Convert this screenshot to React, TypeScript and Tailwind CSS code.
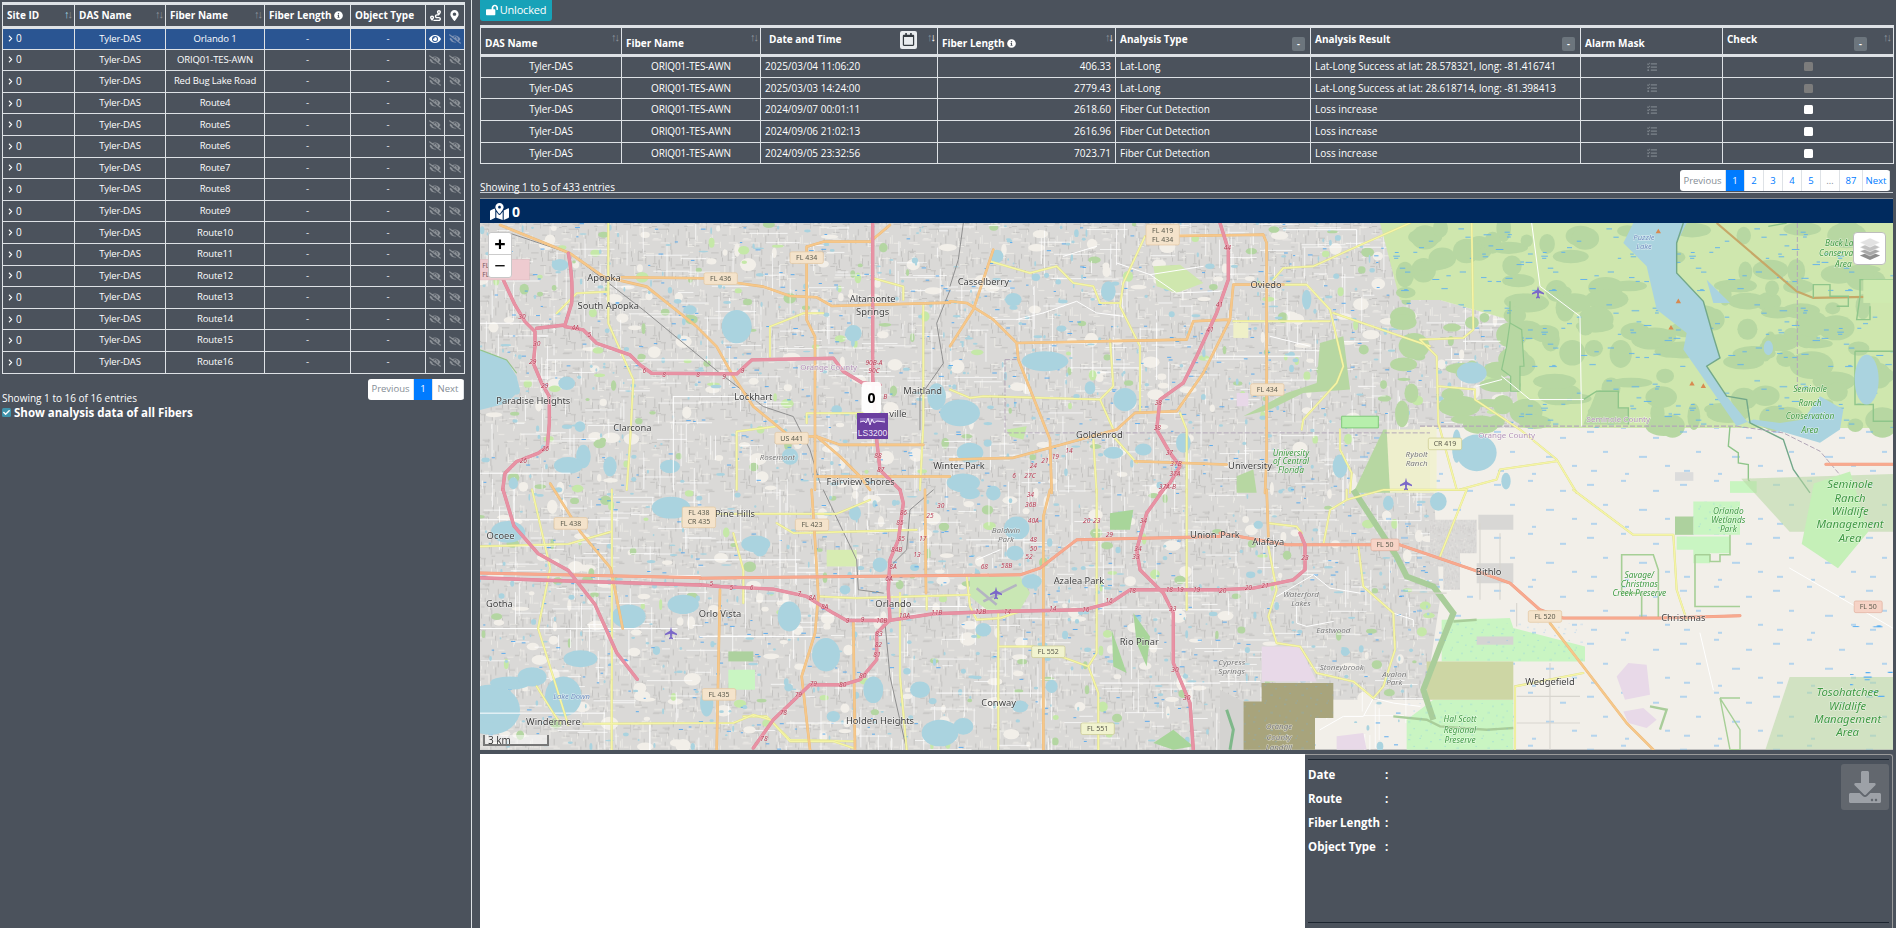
import {
  FaChevronRight, FaDownload, FaEye, FaEyeSlash, FaInfoCircle, FaLockOpen, FaMapMarkedAlt,
  FaMapMarkerAlt, FaRegCalendar, FaRoute, FaTasks, FaCheck,
} from "react-icons/fa";

const fibers = ["Orlando 1", "ORIQ01-TES-AWN", "Red Bug Lake Road", "Route4", "Route5", "Route6", "Route7", "Route8", "Route9", "Route10", "Route11", "Route12", "Route13", "Route14", "Route15", "Route16"];

const analysis = [
  ["2025/03/04 11:06:20", "406.33", "Lat-Long", "Lat-Long Success at lat: 28.578321, long: -81.416741", true],
  ["2025/03/03 14:24:00", "2779.43", "Lat-Long", "Lat-Long Success at lat: 28.618714, long: -81.398413", true],
  ["2024/09/07 00:01:11", "2618.60", "Fiber Cut Detection", "Loss increase", false],
  ["2024/09/06 21:02:13", "2616.96", "Fiber Cut Detection", "Loss increase", false],
  ["2024/09/05 23:32:56", "7023.71", "Fiber Cut Detection", "Loss increase", false],
] as const;

// --- map data: each frame has its own coordinates, taken from crops of the picture
const frames: Record<string, string> = {
  a: "translate(470 190) scale(.33333)",
  b: "translate(950 223) scale(.33333)",
  c: "translate(1420 223) scale(.33333)",
  d: "translate(700 490) scale(.33333)",
  e: "translate(1220 490) scale(.33333)",
  f: "translate(470 680) scale(.33333)",
  s: "scale(1.2092)",
};

type Roads = { pink?: string[]; salmon?: string[]; orange?: string[]; yellow?: string[]; rail?: string[]; white?: string[] };

const roads: Record<string, Roads> = {
  a: {
    pink: ["M100 270L135 345L165 395L195 425L195 470L190 520L215 580L238 620L238 700L232 770L205 790L140 815L105 850L98 900", "M295 190Q310 270 305 340L285 405L200 415", "M285 410L340 420L380 460L480 495L510 525L545 550L800 552L845 510L1090 505L1120 545L1175 578L1230 585", "M1208 100L1208 560L1220 750L1230 840L1290 900"],
    orange: ["M90 105L300 190L400 260L530 290L680 410L740 470L790 560L850 650L960 740L1040 740L1110 800L1170 860L1200 900", "M455 262L700 265L880 290L960 318L1040 322L1085 348L1440 338", "M1010 170L1010 390L1035 440L1035 900", "M1010 170L1060 155L1200 155L1260 105", "M1040 740L1110 765L1360 765M1035 860L1440 860"],
    yellow: ["M415 100L415 400L490 570L480 760L470 900", "M900 500L900 410L1000 370L1060 370", "M800 900L800 725L915 710", "M1010 700L1010 670L1230 670", "M1210 265L1300 290L1300 330", "M1360 340L1360 700L1350 900", "M260 370L320 310L415 305"],
    rail: ["M120 130L300 190L520 360L750 550L880 650L970 680L1020 780L1050 880", "M1440 300L1400 400L1420 520L1350 620L1350 720"],
    white: ["M30 400H240M230 510H1000M610 620V900M610 620H900M30 850H300"],
  },
  b: {
    pink: ["M810 0L835 80L835 170L800 270L740 400L700 480L630 530L620 620L660 690L690 730L660 780L630 810"],
    orange: ["M590 40L940 35L950 60L950 700L945 810", "M850 185H1000", "M0 235L50 240L130 290L200 360L710 350L730 295L840 290L850 185", "M130 80L70 260L0 370", "M200 360L205 410L300 650L305 810", "M840 290L760 450L680 565L555 570L500 620L190 705L0 710", "M555 715L830 725"],
    yellow: ["M585 40L520 180L510 250L570 370L570 570", "M120 115L240 150L320 130L370 180L430 190L450 240L510 240", "M480 350L490 490L450 530L100 520L60 525L0 500", "M450 530L490 620", "M430 650L440 810", "M970 170L1000 135L1090 130L1200 80L1380 0", "M1000 185L1070 185L1140 260L1180 430L1160 480L1060 590L1055 620", "M1150 270L1440 370", "M690 570L710 620L710 810", "M1170 620L1170 680L1205 750L1200 810", "M490 640L560 720", "M850 295H1140"],
    rail: ["M40 0L25 110L0 190"],
    white: ["M500 120L600 155L760 130M600 155L680 210L810 205M280 270L380 235L440 270L520 280M200 290L280 270M340 100L440 70M1000 20H1220V70M360 435H570M960 340L1080 370M800 400H1050M620 300V470"],
  },
  c: {
    yellow: ["M155 0L160 320L130 345L0 350", "M0 350L50 400L55 600L110 800", "M55 490L165 500L165 530L300 620L410 710L470 810", "M120 800L230 770L240 740L410 715"],
    white: ["M335 0L360 190L480 280L485 610", "M245 460L330 530L490 530", "M170 490L245 470", "M130 355H240M95 375V410H130"],
  },
  d: {
    pink: ["M600 0L610 40L595 150L570 210L565 300L570 390L530 430L530 510L480 570L430 585L330 585L220 690L160 775", "M0 285L60 290L220 298L320 320L400 370L440 392L570 392L700 372L900 365L1150 360L1230 340L1290 300L1560 300", "M1390 0L1340 70L1310 180L1320 240L1390 310L1420 370L1420 520L1470 640L1480 780"],
    salmon: ["M0 265L960 255L1020 235L1130 150L1560 140"],
    orange: ["M335 0L345 150L355 320L345 430L305 560L330 780", "M60 300L50 780", "M675 0L678 310", "M460 400L465 780", "M1050 0L1030 80L1030 780"],
    yellow: ["M100 130L130 240L130 340", "M0 72H410L510 30", "M230 100L280 130L650 120", "M1190 0V490L1165 530L1195 610V780", "M1460 0V360", "M895 370V780", "M895 470H1000L1165 530", "M800 260L810 350L830 390L900 385L960 365", "M360 320L470 325L810 315", "M600 310V560L620 780", "M130 680H200L270 750L460 755", "M680 320V360"],
    rail: ["M370 0L470 210L475 300L550 310", "M700 0L630 60L620 180L580 220", "M555 400L570 560L620 780"],
    white: ["M0 210H300M0 440H340M620 350H800M800 150H1000M710 610H1030M1200 360H1560M1200 580H1560M240 0V300M830 210L900 180"],
  },
  e: {
    pink: ["M240 130L255 165L255 240L220 270L100 295L0 300"],
    salmon: ["M0 130L200 165H540L760 240L870 280L960 360L1030 385H1320L1560 378"],
    orange: ["M140 0L145 140", "M990 400L1220 700L1300 780"],
    yellow: ["M380 0V30L330 60L310 165", "M380 30L490 0H740L660 200", "M1060 0L1240 135H1360L1370 300L1400 390", "M145 100L230 110L245 130", "M145 170L170 300L145 380L170 460L240 470L290 550L400 575L460 625L490 590L525 480L520 370L430 290L415 170", "M885 780V590L1090 550"],
    white: ["M170 320L280 255L330 295L420 310M230 340V400L260 410L340 395M0 575H120M300 720L370 680H430L460 625L520 640L600 650M520 370L580 390V410M1440 430L1480 600"],
  },
  f: {
    yellow: ["M340 132L790 130L850 105L900 120L960 185H1090L1150 205", "M200 20L250 100L270 130", "M425 0V210"],
    white: ["M540 135V210M950 130H1200"],
  },
  s: {
    pink: ["M416 405L425 435L445 458L470 472L492 500L510 540L527 562", "M397 478L450 480L579 484"],
    salmon: ["M397 474L579 478", "M1510 384H1566"],
    orange: ["M455 400L480 440L505 470L515 520"],
    yellow: ["M506 405V562", "M397 452L470 450L505 440", "M440 405L455 470L445 520L470 600"],
    white: ["M397 430H510M397 520H560M397 590H500M1480 470L1566 520"],
  },
};

const roadStyle = {
  white: { c: "#ffffff", w: 1 },
  yellow: { c: "#f5f5a6", w: 1.5, casing: "#dcdc8a" },
  orange: { c: "#f6c78a", w: 2, casing: "#e8b878" },
  salmon: { c: "#f8a98e", w: 2.4, casing: "#ec9a80" },
  pink: { c: "#e892a4", w: 2.8, casing: "#dd8497" },
  rail: { c: "#8f8f8f", w: 1 },
} as const;

// [cx, cy, rx, ry] in a frame's coordinates
const lakes: Record<string, number[][]> = {
  a: [[800, 410, 45, 50], [270, 225, 25, 18], [290, 580, 25, 20], [340, 800, 22, 35], [420, 830, 20, 30], [600, 830, 30, 20], [660, 360, 20, 14], [1150, 430, 25, 25], [1400, 620, 28, 40], [960, 800, 25, 25], [330, 710, 16, 16], [130, 880, 14, 18], [1100, 660, 16, 14]],
  b: [[285, 415, 70, 30], [525, 530, 35, 35], [475, 205, 22, 30], [700, 660, 22, 30], [30, 570, 60, 40], [60, 690, 40, 30], [490, 690, 30, 18], [580, 680, 25, 18], [1170, 730, 22, 35], [40, 780, 50, 28], [140, 100, 20, 20], [190, 230, 25, 20], [420, 495, 16, 20], [1070, 230, 14, 30]],
  c: [[155, 450, 45, 32], [170, 690, 60, 55], [110, 670, 14, 50], [1340, 470, 36, 75], [1045, 375, 14, 22], [258, 775, 14, 25]],
  d: [[268, 380, 35, 45], [378, 495, 42, 50], [465, 70, 18, 22], [950, 115, 38, 35], [945, 190, 26, 22], [995, 275, 30, 22], [520, 600, 30, 40], [720, 730, 55, 40], [790, 710, 30, 25], [850, 420, 24, 20], [660, 600, 30, 25], [810, 10, 30, 18], [880, 10, 22, 22], [435, 300, 16, 14], [180, 170, 25, 30], [1055, 590, 18, 20], [960, 650, 24, 18], [540, 225, 22, 22], [400, 680, 20, 16], [20, 640, 20, 40]],
  e: [[505, 40, 16, 22], [655, 35, 25, 28], [115, 105, 14, 12], [92, 255, 14, 10], [480, 770, 10, 14]],
  f: [[60, 90, 90, 75], [280, 50, 55, 60], [120, 10, 60, 20]],
  s: [[420, 440, 14, 9], [470, 385, 12, 7], [520, 510, 14, 10], [565, 500, 13, 8], [440, 560, 12, 8], [555, 420, 16, 9], [625, 450, 12, 7], [480, 545, 14, 7], [405, 590, 10, 8]],
};

const shields: [string, number, number, string, string?, string?][] = [
  ["b", 638, 35, "FL 419|FL 434"],
  ["a", 1010, 203, "FL 434"],
  ["a", 752, 266, "FL 436"],
  ["a", 965, 745, "US 441"],
  ["s", 472, 433, "FL 438"],
  ["s", 578, 428, "FL 438|CR 435"],
  ["d", 336, 105, "FL 423"],
  ["b", 952, 500, "FL 434"],
  ["c", 75, 663, "CR 419", "#f3f3d0", "#c9c98c"],
  ["e", 495, 165, "FL 50", "#f6d3c6", "#e0ad9b"],
  ["e", 975, 380, "FL 520"],
  ["d", 57, 614, "FL 435"],
  ["d", 1045, 486, "FL 552", "#f1f3cf", "#c9c98c"],
  ["d", 1193, 717, "FL 551", "#f1f3cf", "#c9c98c"],
  ["s", 1545, 502, "FL 50", "#f6d3c6", "#e0ad9b"],
];

// frame, x, y, text, kind
type Label = [string, number, number, string, "place" | "park" | "grey" | "county" | "water"];
const labels: Label[] = [
  ["a", 402, 272, "Apopka", "place"], ["a", 415, 356, "South Apopka", "place"], ["a", 190, 642, "Paradise Heights", "place"],
  ["a", 487, 723, "Clarcona", "place"], ["a", 850, 629, "Lockhart", "place"], ["a", 1208, 336, "Altamonte", "place"],
  ["a", 1208, 375, "Springs", "place"], ["a", 1358, 612, "Maitland", "place"], ["a", 1284, 681, "ville", "place"],
  ["a", 1172, 885, "Fairview Shores", "place"], ["a", 922, 811, "Rosemont", "grey"], ["a", 1076, 541, "Orange County", "county"],
  ["b", 100, 187, "Casselberry", "place"], ["b", 948, 196, "Oviedo", "place"], ["b", 448, 644, "Goldenrod", "place"],
  ["b", 900, 737, "University", "place"], ["b", 1023, 698, "University", "park"], ["b", 1023, 724, "of Central", "park"], ["b", 1023, 750, "Florida", "park"],
  ["b", 1400, 703, "Rybolt", "grey"], ["b", 1400, 729, "Ranch", "grey"],
  ["s", 793, 388, "Winter Park", "place"], ["s", 414, 446, "Ocoee", "place"], ["s", 413, 502, "Gotha", "place"],
  ["c", 672, 52, "Puzzle", "water"], ["c", 672, 79, "Lake", "water"], ["c", 595, 596, "Seminole County", "county"], ["c", 260, 645, "Orange County", "county"],
  ["c", 1170, 508, "Seminole", "park"], ["c", 1170, 548, "Ranch", "park"], ["c", 1170, 589, "Conservation", "park"], ["c", 1170, 629, "Area", "park"],
  ["c", 1270, 68, "Buck Lake", "park"], ["c", 1270, 100, "Conservation", "park"], ["c", 1270, 131, "Area", "park"],
  ["d", 105, 81, "Pine Hills", "place"], ["d", 60, 381, "Orlo Vista", "place"], ["d", 580, 352, "Orlando", "place"], ["d", 1137, 283, "Azalea Park", "place"],
  ["d", 1318, 467, "Rio Pinar", "place"], ["d", 896, 648, "Conway", "place"], ["d", 540, 704, "Holden Heights", "place"], ["d", 1510, 145, "Union", "place"],
  ["d", 918, 130, "Baldwin", "grey"], ["d", 918, 156, "Park", "grey"],
  ["e", 30, 145, "Park", "place"], ["e", 145, 167, "Alafaya", "place"], ["e", 806, 257, "Bithlo", "place"], ["e", 1390, 394, "Christmas", "place"], ["e", 990, 587, "Wedgefield", "place"],
  ["e", 243, 323, "Waterford", "grey"], ["e", 243, 349, "Lakes", "grey"], ["e", 340, 430, "Eastwood", "grey"], ["e", 365, 540, "Stoneybrook", "grey"], ["e", 523, 561, "Avalon", "grey"], ["e", 523, 587, "Park", "grey"],
  ["e", 35, 526, "Cypress", "grey"], ["e", 35, 552, "Springs", "grey"], ["e", 177, 719, "Orange", "grey"], ["e", 177, 751, "County", "grey"], ["e", 177, 780, "Landfill", "grey"],
  ["e", 720, 696, "Hal Scott", "park"], ["e", 720, 729, "Regional", "park"], ["e", 720, 761, "Preserve", "park"],
  ["e", 1258, 264, "Savage/", "park"], ["e", 1258, 291, "Christmas", "park"], ["e", 1258, 318, "Creek Preserve", "park"], ["e", 1525, 74, "Orlando", "park"], ["e", 1525, 100, "Wetlands", "park"], ["e", 1525, 126, "Park", "park"],
  ["f", 305, 58, "Lake Down", "water"], ["f", 250, 136, "Windermere", "place"],
  ["s", 1530, 404, "Seminole", "park"], ["s", 1530, 415, "Ranch", "park"], ["s", 1530, 426, "Wildlife", "park"], ["s", 1530, 437, "Management", "park"], ["s", 1530, 448, "Area", "park"],
  ["s", 1528, 576, "Tosohatchee", "park"], ["s", 1528, 587, "Wildlife", "park"], ["s", 1528, 598, "Management", "park"], ["s", 1528, 609, "Area", "park"],
];

const exitsNumbers: [string, number, number, string][] = [
  ["a", 156, 388, "30"], ["a", 200, 468, "30"], ["a", 188, 522, "29"], ["a", 224, 593, "29"], ["a", 226, 783, "26"], ["a", 160, 820, "26"], ["a", 316, 420, "4A"], ["a", 358, 440, "5"],
  ["a", 523, 548, "6"], ["a", 582, 562, "8"], ["a", 684, 560, "8"], ["a", 762, 566, "9"], ["a", 818, 548, "9"], ["a", 1212, 525, "90B-A"], ["a", 1212, 548, "90C"], ["a", 1246, 626, "B"], ["a", 1224, 803, "88"], ["a", 1232, 847, "87"],
  ["b", 832, 80, "44"], ["b", 808, 252, "41"], ["b", 780, 327, "41"], ["b", 625, 547, "38"], ["b", 622, 620, "38"], ["b", 658, 695, "37"], ["b", 678, 730, "37B"], ["b", 675, 760, "37A"], ["b", 652, 797, "37A-B"],
  ["b", 357, 690, "14"], ["b", 316, 708, "19"], ["b", 285, 720, "21"], ["b", 250, 736, "24"], ["b", 192, 765, "6"], ["b", 240, 765, "27C"],
  ["d", 34, 290, "5"], ["d", 94, 301, "5"], ["d", 155, 300, "6"], ["d", 298, 318, "7"], ["d", 337, 330, "8A"], ["d", 374, 359, "8A"], ["d", 443, 401, "9"], ["d", 488, 397, "9"], ["d", 545, 399, "10B"], ["d", 613, 385, "10A"], ["d", 710, 376, "11B"], ["d", 842, 374, "12B"], ["d", 922, 372, "14"], ["d", 1058, 365, "14"], ["d", 1157, 368, "16"], ["d", 1227, 340, "16"], ["d", 1297, 310, "18"], ["d", 1408, 306, "18"], ["d", 1440, 307, "19"], ["d", 1490, 307, "19"],
  ["d", 610, 77, "86"], ["d", 600, 106, "85"], ["d", 604, 154, "85"], ["d", 590, 186, "84B"], ["d", 579, 238, "8A"], ["d", 567, 273, "6A"], ["d", 537, 440, "83"], ["d", 535, 471, "82"], ["d", 531, 503, "81"], ["d", 488, 565, "80"], ["d", 428, 593, "80"], ["d", 340, 590, "79"], ["d", 295, 623, "79"], ["d", 250, 677, "78"], ["d", 192, 755, "78"],
  ["d", 722, 54, "30"], ["d", 690, 85, "25"], ["d", 668, 153, "17"], ["d", 651, 203, "13"], ["d", 853, 238, "68"], ["d", 920, 235, "58B"], ["d", 991, 20, "34"], ["d", 992, 51, "36B"], ["d", 1000, 99, "40A"], ["d", 1000, 158, "48"], ["d", 1000, 185, "50"], ["d", 987, 208, "52"], ["d", 1160, 99, "20"], ["d", 1190, 99, "23"], ["d", 1228, 141, "29"], ["d", 1330, 101, "34"], ["d", 1314, 184, "34"], ["d", 1308, 208, "33"], ["d", 1418, 365, "33"], ["d", 1425, 548, "30"], ["d", 1460, 630, "30"],
  ["e", 255, 211, "23"], ["e", 85, 302, "20"], ["e", 135, 296, "21"], ["e", 8, 310, "20"],
];

const planes: [number, number][] = [[1538, 292], [1406, 484], [996, 593], [671, 633]];
const beacons: [number, number][] = [[715, 25], [775, 235], [753, 314], [816, 482], [850, 489]];

function seeded(seed: number) {
  let t = seed;
  return () => {
    t = (t + 0x6d2b79f5) | 0;
    let r = Math.imul(t ^ (t >>> 15), 1 | t);
    r = (r + Math.imul(r ^ (r >>> 7), 61 | r)) ^ r;
    return ((r ^ (r >>> 14)) >>> 0) / 4294967296;
  };
}

const rnd = seeded(41);
const inTown = () => {
  // east edge of the built up area depends on the height
  const y = 223 + rnd() * 527;
  const edge = y < 300 ? 1390 : y < 428 ? 1510 : 1430;
  return [480 + rnd() * (edge - 480), y];
};
const townLakes = Array.from({ length: 760 }, () => { const [x, y] = inTown(); return [x, y, 0.8 + rnd() * rnd() * 5, 0.8 + rnd() * rnd() * 4]; });
const townGreen = Array.from({ length: 240 }, () => { const [x, y] = inTown(); return [x, y, 1.5 + rnd() * 5, 1.5 + rnd() * 4, rnd()]; });
const townBare = Array.from({ length: 300 }, () => { const [x, y] = inTown(); return [x, y, 2 + rnd() * 7, 2 + rnd() * 5]; });
const townStreets = Array.from({ length: 800 }, () => { const [x, y] = inTown(); const l = 8 + rnd() * 38; return rnd() > 0.5 ? `M${x} ${y}h${l}` : `M${x} ${y}v${l}`; }).join("");
const townDashes = Array.from({ length: 600 }, () => { const [x, y] = inTown(); return `M${x} ${y}h${2 + rnd() * 3}`; }).join("");
const woods = Array.from({ length: 150 }, () => [1400 + rnd() * 493, 223 + rnd() * 205, 6 + rnd() * 16, 4 + rnd() * 10]);

// speckle of house blocks: a tile of short strokes that do not line up
const tileBits = (n: number) => Array.from({ length: n }, () => {
  const x = (rnd() * 84).toFixed(1);
  const y = (rnd() * 66).toFixed(1);
  const l = (3 + rnd() * 6).toFixed(1);
  return rnd() > 0.5 ? `M${x} ${y}h${l}` : `M${x} ${y}v${l}`;
}).join("");
const tileDark = tileBits(90);
const tileLight = tileBits(70);
const marshBits = Array.from({ length: 34 }, () => `M${(rnd() * 140).toFixed(1)} ${(rnd() * 70).toFixed(1)}h${(3 + rnd() * 5).toFixed(1)}`).join("");

function MapDrawing() {
  return (
    <svg viewBox="480 223 1413 527" className="block w-full h-full blur-[0.35px]" preserveAspectRatio="none">
      <defs>
        <pattern id="urban" width="90" height="72" patternUnits="userSpaceOnUse">
          <rect width="90" height="72" fill="#dad9d7" />
          <path d={tileDark} stroke="#c4c3c1" strokeWidth="1" />
          <path d={tileLight} stroke="#efede9" strokeWidth=".8" />
        </pattern>
        <pattern id="marsh" width="148" height="76" patternUnits="userSpaceOnUse">
          <path d={marshBits} stroke="#58aef2" strokeWidth=".9" />
        </pattern>
        <pattern id="sparse" width="93" height="53" patternUnits="userSpaceOnUse">
          <path d="M6 8h7M40 4h5M72 14h6M22 28h5M58 33h8M84 42h5M10 47h6M44 50h4" stroke="#66b2f2" strokeWidth=".9" />
        </pattern>
      </defs>

      <rect x="480" y="223" width="1413" height="527" fill="#f2efe9" />
      <path d="M480 223H1390L1400 300L1440 300L1510 320L1520 428L1430 428L1440 600L1425 700L1330 700L1200 700L1000 750H480Z" fill="url(#urban)" />
      <path d="M1000 750L1200 690L1290 690V750Z" fill="url(#urban)" />
      {townBare.map((b, i) => <ellipse key={i} cx={b[0]} cy={b[1]} rx={b[2]} ry={b[3]} fill="#f2efe9" />)}
      {townGreen.map((g, i) => <ellipse key={i} cx={g[0]} cy={g[1]} rx={g[2]} ry={g[3]} fill={g[4] > 0.6 ? "#c5e8a8" : "#b4d6a2"} />)}
      <path d={townStreets} stroke="#ffffff" strokeOpacity=".8" strokeWidth=".9" fill="none" />
      {townLakes.map((l, i) => <ellipse key={i} cx={l[0]} cy={l[1]} rx={l[2]} ry={l[3]} fill="#aad3df" />)}
      <path d={townDashes} stroke="#4fa6ee" strokeWidth=".9" />

      {/* north east: woods and marsh */}
      <path d="M1345 223H1893V428H1520L1510 320L1440 300L1400 300L1380 223Z" fill="#cfe7ae" />
      {woods.map((w, i) => <ellipse key={i} cx={w[0]} cy={w[1]} rx={w[2]} ry={w[3]} fill="#b7d7a2" />)}
      <path d="M1345 223H1893V428H1520L1510 320L1440 300L1400 300L1380 223Z" fill="url(#marsh)" />
      <path d="M1345 428H1893V750H1430V700Z" fill="url(#sparse)" />

      <g transform={frames.c}>
        <path d="M0 610H50V810H0Z" fill="#f1f1d2" />
        <path d="M640 0H800L770 60L770 150L850 235L880 340L900 405L860 430L920 520L985 600L1100 630L1200 660L1260 620L1270 560L1200 520L1150 590L1080 600L1000 590L950 610L860 480L790 380L800 330L710 260L680 130L610 60Z" fill="#aad3df" />
        <path d="M860 170L930 240L880 240Z" fill="#aad3df" />
        <path d="M490 605L530 505H595V555H625V605Z" fill="#b7d7a2" />
        <path d="M790 0L770 60L770 150L850 235L880 340L900 405L860 430L920 520L980 530L990 600L1090 650L1120 740L1170 810" fill="none" stroke="#73a88a" strokeWidth="1.4" vectorEffect="non-scaling-stroke" />
        <path d="M890 0L1130 205L1180 225L1420 220" fill="none" stroke="#c6a868" strokeWidth="2.2" vectorEffect="non-scaling-stroke" />
        <path d="M270 235V300L305 320L312 430H300V505H272V460L245 440L260 370L270 300" fill="#b7d7a2" stroke="#8fc58a" strokeWidth="1.2" vectorEffect="non-scaling-stroke" />
        <path d="M490 530L530 505H595V555H625V605M1180 225V185H1230V220H1285V250H1250M1320 220V170H1420M1320 220L1310 290H1350V250M1305 385H1420M1305 385V545H1360V595H1420M930 610L925 670L955 690V720L985 725V770L1005 800M1045 10L1100 0" fill="none" stroke="#8fc58a" strokeWidth="1.4" vectorEffect="non-scaling-stroke" />
        <rect x="930" y="775" width="80" height="35" fill="#c8f5c0" />
        <rect x="765" y="748" width="55" height="26" fill="#dcdcdc" />
        <path d="M1330 170H1420V240H1330Z" fill="#cfeab0" />
        <path d="M0 610H950" stroke="#b3a7b8" strokeWidth="1.2" strokeDasharray="5 2" vectorEffect="non-scaling-stroke" />
        <path d="M950 610L1090 630L1200 685L1280 780M1132 0V500" fill="none" stroke="#b3a7b8" strokeWidth="1" strokeDasharray="5 2" vectorEffect="non-scaling-stroke" />
      </g>

      <g transform={frames.b}>
        <path d="M1310 620H1440V810H1310Z" fill="#eeefcd" />
        <path d="M1210 810L1300 620H1310L1320 810Z" fill="#b7d7a2" />
        <path d="M1175 580H1285V615H1175Z" fill="#b7efac" stroke="#7fca79" strokeWidth="1" vectorEffect="non-scaling-stroke" />
        <path d="M880 580L1010 510L1100 480L1110 360L1180 340L1200 500L1060 510L960 560Z" fill="#b7d7a2" />
        <path d="M850 300H895V345H850Z" fill="#eff0c8" />
        <path d="M860 510H895V550H860Z" fill="#e8d8e8" />
        <path d="M860 760L910 740L920 810H860Z" fill="#b7d7a2" />
        <path d="M610 130L690 125L760 180L680 210L620 190Z" fill="#cfe7ae" />
        <path d="M170 620L230 610L220 650L180 640Z" fill="#c5e8a8" />
        <path d="M170 630H1440" stroke="#b3a7b8" strokeWidth="1" strokeDasharray="5 2" vectorEffect="non-scaling-stroke" />
        <path d="M165 410H200M165 410V630" stroke="#b3a7b8" strokeWidth="1" strokeDasharray="5 2" vectorEffect="non-scaling-stroke" />
      </g>

      <g transform={frames.e}>
        <path d="M125 580H340V685H285V780H70V635H125Z" fill="#a8a47c" />
        <path d="M125 470H240L290 575H125Z" fill="#e8d9e8" />
        <path d="M665 390L870 385L880 415L1095 470V515H665Z" fill="#c9f5c2" />
        <path d="M560 690L640 630H880V780H560Z" fill="#c9f5c2" />
        <path d="M620 515H880V630H620Z" fill="#cdd6a4" />
        <path d="M770 440H880V465H770Z" fill="#d4d4d2" />
        <path d="M1420 35H1560V135H1420ZM1370 140H1530V190H1470V220H1420V180H1370Z" fill="#c9f5c2" />
        <rect x="1365" y="80" width="55" height="55" fill="#add19e" />
        <path d="M1190 560L1225 520L1280 525L1290 615L1215 630ZM1210 665L1270 655L1310 690L1280 715L1225 700ZM350 740L430 730L440 780H350Z" fill="#e8d9e8" />
        <path d="M630 90H770V190H720V300H670V230H630Z" fill="url(#urban)" />
        <path d="M770 220H880V280H770ZM775 75H880V120H775Z" fill="#d8d7d5" />
        <path d="M400 0L530 200L560 260L640 290L700 370L660 470L610 600L640 690" fill="none" stroke="#a9cd9a" strokeWidth="6" vectorEffect="non-scaling-stroke" />
        <path d="M520 680L620 690L660 710L800 720L880 715M700 395L770 390M1290 650L1340 660L1320 720" fill="none" stroke="#a9cd9a" strokeWidth="2.4" vectorEffect="non-scaling-stroke" />
        <path d="M1205 195H1300L1315 240V385H1265V310H1205ZM1425 195H1470V215H1500V195H1530V135M1425 195V350H1560M1500 625H1560" fill="none" stroke="#a6cf96" strokeWidth="1.6" vectorEffect="non-scaling-stroke" />
        <path d="M1500 625L1560 720V780H1530L1500 625Z" fill="none" stroke="#a6cf96" strokeWidth="1.4" vectorEffect="non-scaling-stroke" />
        <path d="M890 700H1080M990 520V780M890 620H1080M780 100V330M840 130V330M560 310H680M890 340V410" stroke="#d8d5cf" strokeWidth="1.1" fill="none" vectorEffect="non-scaling-stroke" />
        <path d="M0 600V780H70V635" fill="#d4d3d1" />
        <path d="M20 660L40 720L30 780" stroke="#7fb88a" strokeWidth="3" fill="none" vectorEffect="non-scaling-stroke" />
        <path d="M125 580H340V685H285V780H70V635H125ZM665 400H1095V515H665ZM560 640H880V780H560ZM1420 35H1560V135H1420Z" fill="url(#sparse)" />
      </g>

      <g transform={frames.s}>
        <path d="M1440 396L1566 392V440H1480ZM1480 560H1566V620H1460Z" fill="#b7d7a2" opacity=".55" />
        <path d="M1500 400L1530 390L1545 440L1520 470L1490 450Z" fill="#c5f0b8" />
        <path d="M1530 515H1566V580H1530Z" fill="url(#marsh)" />
      </g>

      <g transform={frames.d}>
        <path d="M85 540H165V600H85Z" fill="#c9f5c2" />
        <path d="M85 485H160V515H85Z" fill="#add19e" />
        <path d="M380 180H470V230H380Z" fill="#d7ecb2" />
        <path d="M810 260H960L990 310L960 360H860L810 320Z" fill="#c9e7b4" />
        <path d="M1235 420L1280 550L1240 530ZM1300 370L1350 440L1340 530L1310 460ZM1230 70L1300 60L1290 120L1230 120ZM1360 760L1420 720L1480 770L1420 780Z" fill="#a8d59a" />
      </g>

      {Object.entries(lakes).map(([f, list]) => (
        <g key={f} transform={frames[f]}>
          {list.map((l, i) => <ellipse key={i} cx={l[0]} cy={l[1]} rx={l[2]} ry={l[3]} fill="#aad3df" />)}
        </g>
      ))}
      <g transform={frames.a}>
        <path d="M30 480L110 510L140 560L150 600L110 640L30 660Z" fill="#aad3df" />
        <path d="M30 480L110 510L140 550" fill="none" stroke="#93c48a" strokeWidth="1.2" vectorEffect="non-scaling-stroke" />
      </g>

      {(["white", "rail", "yellow", "orange", "salmon", "pink"] as const).map((kind) => (
        <g key={kind} fill="none" strokeLinejoin="round" strokeLinecap="round">
          {Object.entries(roads).map(([f, r]) => {
            const st = roadStyle[kind];
            const d = (r[kind] ?? []).join("");
            if (!d) return null;
            return (
              <g key={f} transform={frames[f]}>
                {"casing" in st && <path d={d} stroke={st.casing} strokeWidth={st.w + 0.6} vectorEffect="non-scaling-stroke" />}
                <path d={d} stroke={st.c} strokeWidth={st.w} vectorEffect="non-scaling-stroke" />
              </g>
            );
          })}
        </g>
      ))}

      <g transform={frames.d}>
        <path d="M830 295L890 345M850 335L950 285" stroke="#b4b4c2" strokeWidth="2.6" vectorEffect="non-scaling-stroke" />
      </g>
      <g transform={frames.c} fill="#d8894f">
        {beacons.map(([x, y], i) => <path key={i} d={`M${x} ${y - 8}l8 14h-16z`} />)}
      </g>
      {planes.map(([x, y], i) => (
        <path key={i} transform={`translate(${x} ${y})`} fill="#7b68c8" d="M0-6L1-2L6 1V2.5L1 1L.8 4L2 5.5V6.5L0 6L-2 6.5V5.5L-.8 4L-1 1L-6 2.5V1L-1-2Z" />
      ))}

      {exitsNumbers.map(([f, x, y, t], i) => (
        <g key={i} transform={frames[f]}>
          <text x={x} y={y} textAnchor="middle" fontSize="20" fontStyle="italic" fill="#b5374f" stroke="#ffffff" strokeOpacity=".45" strokeWidth="2" paintOrder="stroke" fontFamily="'Noto Sans',sans-serif">{t}</text>
        </g>
      ))}

      {labels.map(([f, x, y, t, kind], i) => {
        const k = f === "s" ? 0.2757 : 1;
        const style = {
          place: { fs: 28, c: "#3f3f3f", it: false },
          park: { fs: 25, c: "#3f9a42", it: true },
          grey: { fs: 24, c: "#777777", it: true },
          county: { fs: 24, c: "#b393b8", it: false },
          water: { fs: 23, c: "#6f8fc0", it: true },
        }[kind];
        return (
          <g key={i} transform={frames[f]}>
            <text x={x} y={y} textAnchor="middle" fontSize={(f === "s" && kind === "park" ? 34 : style.fs) * k} fontStyle={style.it ? "italic" : "normal"} fill={style.c} stroke="#ffffff" strokeOpacity=".6" strokeWidth={3 * k} paintOrder="stroke" fontFamily="'Noto Sans',sans-serif">{t}</text>
          </g>
        );
      })}

      <g transform={frames.a}>
        <rect x="30" y="208" width="148" height="62" fill="#eecbd0" stroke="#d9aab2" />
        <text x="37" y="233" fontSize="20" fill="#7a5a5f" fontFamily="'Noto Sans',sans-serif">FL Toll</text>
        <text x="37" y="260" fontSize="20" fill="#7a5a5f" fontFamily="'Noto Sans',sans-serif">FL Toll</text>
      </g>

      {shields.map(([f, x, y, t, bg, line], i) => {
        const rows = t.split("|");
        const scale = f === "s" ? 0.2757 : 1;
        const w = (rows[0].length > 5 ? 100 : 84) * scale;
        const h = (rows.length * 27 + 8) * scale;
        return (
          <g key={i} transform={frames[f]}>
            <rect x={x - w / 2} y={y - h / 2} width={w} height={h} rx={5 * scale} fill={bg ?? "#f4e3cb"} stroke={line ?? "#e2c69f"} strokeWidth={2 * scale} />
            {rows.map((row, j) => (
              <text key={row} x={x} y={y - h / 2 + (27 * j + 25) * scale} textAnchor="middle" fontSize={21 * scale} fill="#5b5b4d" fontFamily="'Noto Sans',sans-serif">{row}</text>
            ))}
          </g>
        );
      })}
    </svg>
  );
}

function SortArrows({ active }: { active?: "up" | "down" }) {
  return (
    <span className="absolute top-[3px] right-[3px] text-[11px] font-normal leading-none tracking-[-2px] text-[#8f959c]">
      <span className={active === "up" ? "text-[#9fd4e0]" : ""}>↑</span>
      <span className={active === "down" ? "text-white" : ""}>↓</span>
    </span>
  );
}

function MiniButton() {
  return <span className="absolute right-[5px] top-[9px] flex h-[14px] w-[13px] items-center justify-center rounded-[2px] bg-[#6c757d] text-[9px] leading-none text-white">-</span>;
}

function Pager({ items, className }: { items: string[]; className?: string }) {
  const short = items.length === 3;
  return (
    <div className={`flex overflow-hidden rounded-[3px] text-[9.5px] ${className ?? ""}`}>
      {items.map((item) => {
        const current = item === "1";
        const muted = item === "Previous" || item === "…" || (short && item === "Next");
        return (
          <span
            key={item}
            className={`flex h-[21px] items-center justify-center border-r border-[#dee2e6] ${current ? "bg-[#007bff] text-white" : "bg-white"} ${muted ? "text-[#868e96]" : current ? "" : "text-[#007bff]"} ${item === "Previous" ? "w-[46px]" : item === "Next" ? (short ? "w-[31px]" : "w-[27px]") : item === "87" ? "w-[23px]" : "w-[19px]"}`}
          >
            {item}
          </span>
        );
      })}
    </div>
  );
}

function FiberTable() {
  const head = "relative border border-[#dee2e6] border-b-[3px] border-t-[3px] px-[4px] text-left text-[10px] font-bold";
  const cell = "border border-[#dee2e6] text-center text-[9.5px] tracking-[-0.15px] h-[21.6px] p-0";
  return (
    <table className="w-[462px] table-fixed border-collapse text-white">
      <colgroup>
        <col className="w-[72px]" />
        <col className="w-[91px]" />
        <col className="w-[99px]" />
        <col className="w-[86px]" />
        <col className="w-[75px]" />
        <col className="w-[19px]" />
        <col className="w-[20px]" />
      </colgroup>
      <thead>
        <tr className="h-[24px]">
          <th className={head}>Site ID<SortArrows active="up" /></th>
          <th className={head}>DAS Name<SortArrows /></th>
          <th className={head}>Fiber Name<SortArrows /></th>
          <th className={head}>
            <span className="flex items-center gap-[2px]">Fiber Length <FaInfoCircle className="text-[9px]" /></span>
          </th>
          <th className={head}>Object Type</th>
          <th className={`${head} !px-0`}><FaRoute className="mx-auto text-[11px]" /></th>
          <th className={`${head} !px-0`}><FaMapMarkerAlt className="mx-auto text-[11px]" /></th>
        </tr>
      </thead>
      <tbody>
        {fibers.map((name, i) => (
          <tr key={name} className={i === 0 ? "bg-[#2a5592]" : ""}>
            <td className={`${cell} !text-left pl-[4px]`}>
              <span className="flex items-center gap-[2px] text-[10px]"><FaChevronRight className="text-[7px]" />0</span>
            </td>
            <td className={cell}>Tyler-DAS</td>
            <td className={cell}>{name}</td>
            <td className={cell}>-</td>
            <td className={cell}>-</td>
            <td className={cell}>
              {i === 0 ? <FaEye className="mx-auto text-[12px] text-white" /> : <FaEyeSlash className="mx-auto text-[12px] text-[#8b9096]" />}
            </td>
            <td className={cell}>
              <FaEyeSlash className={`mx-auto text-[12px] ${i === 0 ? "text-[#7f93b5]" : "text-[#8b9096]"}`} />
            </td>
          </tr>
        ))}
      </tbody>
    </table>
  );
}

function AnalysisTable() {
  const head = "relative border border-[#dee2e6] border-y-[3px] px-[4px] text-left text-[10px] font-bold";
  const cell = "border border-[#dee2e6] text-[10px] h-[21.7px] p-0 px-[4px]";
  const name = "text-center text-[9.5px] tracking-[-0.15px]";
  return (
    <table className="w-[1413px] table-fixed border-collapse text-white">
      <colgroup>
        <col className="w-[141px]" />
        <col className="w-[139px]" />
        <col className="w-[177px]" />
        <col className="w-[178px]" />
        <col className="w-[195px]" />
        <col className="w-[270px]" />
        <col className="w-[142px]" />
        <col className="w-[171px]" />
      </colgroup>
      <thead>
        <tr className="h-[29px]">
          <th className={`${head} pt-[5px]`}>DAS Name<SortArrows /></th>
          <th className={`${head} pt-[5px]`}>Fiber Name<SortArrows /></th>
          <th className={`${head} pb-[3px] !pl-[8px]`}>
            Date and Time
            <span className="absolute right-[20px] top-[3px] flex h-[18px] w-[17px] items-center justify-center rounded-[2px] bg-[#e9ecef] text-[#343a40]"><FaRegCalendar className="text-[13px]" /></span>
            <SortArrows active="down" />
          </th>
          <th className={`${head} pt-[5px]`}>
            <span className="flex items-center gap-[2px]">Fiber Length <FaInfoCircle className="text-[9px]" /></span>
            <SortArrows active="down" />
          </th>
          <th className={`${head} pb-[3px]`}>Analysis Type<MiniButton /></th>
          <th className={`${head} pb-[3px]`}>Analysis Result<MiniButton /></th>
          <th className={`${head} pt-[5px]`}>Alarm Mask</th>
          <th className={`${head} pb-[3px]`}>Check<span className="absolute right-[26px] top-[9px] flex h-[14px] w-[13px] items-center justify-center rounded-[2px] bg-[#6c757d] text-[9px] leading-none text-white">-</span><SortArrows /></th>
        </tr>
      </thead>
      <tbody>
        {analysis.map(([date, length, type, result, locked]) => (
          <tr key={date}>
            <td className={`${cell} ${name}`}>Tyler-DAS</td>
            <td className={`${cell} ${name}`}>ORIQ01-TES-AWN</td>
            <td className={cell}>{date}</td>
            <td className={`${cell} text-right`}>{length}</td>
            <td className={cell}>{type}</td>
            <td className={cell}>{result}</td>
            <td className={`${cell} text-center`}><FaTasks className="mx-auto text-[10px] text-[#7d848b]" /></td>
            <td className={`${cell} text-center`}>
              <span className={`mx-auto block h-[9px] w-[9px] rounded-[1.5px] ${locked ? "bg-[#7c7c7c]" : "bg-white"}`} />
            </td>
          </tr>
        ))}
      </tbody>
    </table>
  );
}

function Marker() {
  return (
    <div className="absolute left-[377px] top-[159px] w-[33px]">
      <div className="ml-[5px] flex h-[31px] w-[19px] items-center justify-center rounded-[3px] bg-white/95 text-[14px] font-bold text-black">0</div>
      <svg viewBox="0 0 33 28" className="block h-[28px] w-[33px]">
        <path d="M22 0A7 7 0 0 1 28 9" fill="none" stroke="#111" strokeWidth="3" />
        <path d="M20 1A5 5 0 0 1 25 6L20 6Z" fill="#f0b400" />
        <rect x="0" y="0" width="31" height="26" fill="#6b3fa0" />
        <path d="M3 5H28V9H3Z" fill="#8a68bb" />
        <path d="M3 9L7 8L9 10L11 5L13 12L15 6L17 10L20 8L28 9" fill="none" stroke="#efe6fa" strokeWidth="1" />
        <text x="15.5" y="22.5" textAnchor="middle" fontSize="8.5" fill="#efe6fa" fontFamily="'Liberation Sans',sans-serif">LS3200</text>
      </svg>
    </div>
  );
}

export default function App() {
  return (
    <div className="flex h-[928px] w-[1896px] overflow-hidden bg-[#4b525c] font-['Open_Sans',sans-serif] text-white">
      {/* colonne gauche */}
      <aside className="w-[472px] shrink-0 border-r border-[#dee2e6] pl-[2px] pt-[2px]">
        <FiberTable />
        <div className="relative mt-[5px] h-[22px] w-[462px]">
          <Pager items={["Previous", "1", "Next"]} className="absolute right-0 top-0" />
          <span className="absolute left-0 top-[12px] text-[10px]">Showing 1 to 16 of 16 entries</span>
        </div>
        <label className="mt-[3px] flex items-center gap-[3px] text-[11.5px] font-bold leading-[18px]">
          <span className="flex h-[9px] w-[9px] items-center justify-center rounded-[1.5px] bg-[#3f93ab]"><FaCheck className="text-[7px]" /></span>
          Show analysis data of all Fibers
        </label>
      </aside>

      {/* colonne droite */}
      <main className="flex w-[1424px] flex-col pl-[8px]">
        <button className="flex h-[21px] w-[72px] items-center justify-center gap-[2px] rounded-b-[3px] bg-[#17a2b8] text-[11px] tracking-[-0.2px] text-white">
          <FaLockOpen className="text-[12px]" /> Unlocked
        </button>
        <div className="mt-[4px]"><AnalysisTable /></div>
        <div className="relative h-[29px] w-[1413px] border-b border-[#c9ced3]">
          <span className="absolute left-0 top-[16px] text-[10px]">Showing 1 to 5 of 433 entries</span>
          <Pager items={["Previous", "1", "2", "3", "4", "5", "…", "87", "Next"]} className="absolute right-[3px] top-[6px]" />
        </div>
        <div className="mt-[5px] flex h-[25px] w-[1413px] items-center gap-[3px] border-t border-[#8a8f95] bg-[#002a5e] pl-[10px] text-[14px] font-bold">
          <FaMapMarkedAlt className="text-[19px]" /> 0
        </div>
        <section className="relative h-[527px] w-[1413px] overflow-hidden">
          <MapDrawing />
          <div className="absolute left-[8px] top-[9px] flex w-[24px] flex-col overflow-hidden rounded-[3px] border border-[#c8c8c8] bg-white text-black">
            <span className="flex h-[22px] items-center justify-center border-b border-[#cccccc] text-[20px] font-bold leading-none">+</span>
            <span className="flex h-[22px] items-center justify-center text-[20px] leading-none">−</span>
          </div>
          <div className="absolute left-[1373px] top-[9px] flex h-[33px] w-[33px] items-center justify-center rounded-[4px] border border-[#bdbdbd] bg-white">
            <svg viewBox="0 0 26 26" className="h-[24px] w-[24px]">
              <path d="M13 16L24 20L13 25L2 20Z" fill="#8d8d8d" />
              <path d="M13 11L24 15.5L13 20.5L2 15.5Z" fill="#a8a8a8" stroke="#fff" strokeWidth=".5" />
              <path d="M13 6L24 11L13 16L2 11Z" fill="#c2c2c2" stroke="#fff" strokeWidth=".5" />
              <path d="M13 1L24 6L13 11L2 6Z" fill="#e2e2e2" stroke="#fff" strokeWidth=".5" />
            </svg>
          </div>
          <Marker />
          <div className="absolute bottom-[4px] left-[3px] flex h-[11px] w-[66px] items-center border-2 border-t-0 border-[#777777] bg-white/50 pl-[3px] text-[10px] leading-none text-[#333333]">3 km</div>
        </section>
        <div className="mt-[4px] flex h-[174px] w-[1413px]">
          <div className="w-[825px] bg-white" />
          <div className="relative flex-1 rounded-tr-[3px] border-t border-r border-[#9a9a9a] px-[3px] pt-[4px]">
            <div className="h-[1px] bg-[#1c2530]" />
            <dl className="mt-[3px] pl-0 text-[11.5px] font-bold leading-[24px]">
              {["Date", "Route", "Fiber Length", "Object Type"].map((name) => (
                <div key={name} className="flex">
                  <dt className="w-[77px] whitespace-nowrap">{name}</dt>
                  <dd>:</dd>
                </div>
              ))}
            </dl>
            <span className="absolute right-[3px] top-[9px] flex h-[46px] w-[48px] items-center justify-center rounded-[3px] bg-[#62676e]">
              <FaDownload className="text-[32px] text-[#9da1a7]" />
            </span>
            <div className="absolute bottom-[5px] left-[3px] right-[3px] h-[1px] bg-[#1c2530]" />
          </div>
        </div>
      </main>
    </div>
  );
}
